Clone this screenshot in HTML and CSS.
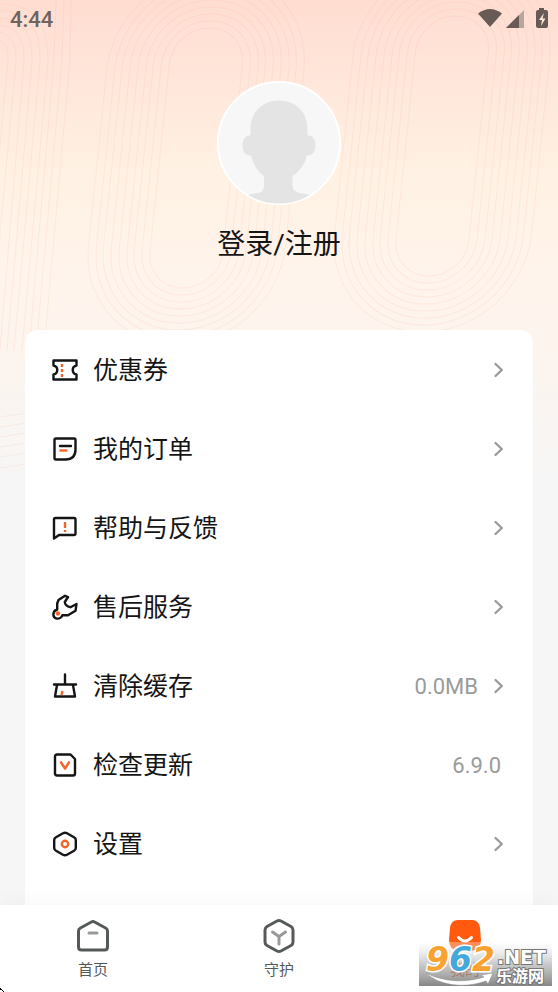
FILE: index.html
```html
<!DOCTYPE html>
<html lang="zh-CN">
<head>
<meta charset="utf-8">
<meta name="viewport" content="width=device-width, initial-scale=1">
<title>我的</title>
<link rel="stylesheet" href="styles.css">
</head>
<body>
<svg class="defs" aria-hidden="true">
  <defs>
    <symbol id="chevron" viewBox="0 0 12 18"><path d="M2.500 3 8.800 9l-6.300 6" fill="none" stroke="#999b9c" stroke-width="2.400" stroke-linecap="round" stroke-linejoin="round"/></symbol>
    <g id="rings" fill="none" stroke="#f9a58a" stroke-opacity=".14" stroke-width="1">
      <g transform="skewX(-5.9)">
        <rect x="176" y="28" width="73" height="260" rx="36"/>
        <rect x="168" y="21" width="89" height="274" rx="44"/>
        <rect x="160" y="14" width="105" height="288" rx="52"/>
        <rect x="153" y="7" width="119" height="302" rx="59"/>
        <rect x="145" y="0" width="135" height="316" rx="67"/>
        <rect x="137" y="-7" width="151" height="330" rx="75"/>
        <rect x="129" y="-14" width="167" height="344" rx="83"/>
        <rect x="122" y="-21" width="181" height="358" rx="90"/>
        <rect x="114" y="-28" width="197" height="372" rx="98"/>
      </g>
    </g>
  </defs>
</svg>
<div class="screen">
  <svg class="pattern" viewBox="0 0 558 475" preserveAspectRatio="xMidYMin slice" aria-hidden="true">
    <use href="#rings"/>
    <use href="#rings" x="246" y="-12"/>
    <g fill="none" stroke="#f9a58a" stroke-opacity=".14">
      <path d="M-10 40Q9 38 8 60L-10 250M-10 32Q17 30 16 60L-6 300M-10 25Q25 22 24 60L0 350M-10 18Q33 14 32 60L7 350M-10 11Q41 6 40 60L14 350M-10 4Q49-2 48 60L22 350M56 0 54 60 29 350M64 0 62 60 36 350M71 0 70 60 44 350"/>
      <path d="M0 417 40 411M0 427 40 421M0 437 40 431M0 447 40 441M0 457 40 451M0 468 40 462"/>
    </g>
  </svg>

  <header class="status">
    <time>4:44</time>
    <svg class="status-icons" width="70" height="22" viewBox="0 0 70 22" aria-label="Wi-Fi、信号、充电中" role="img">
      <path d="M0 5.500Q12-3.500 24 5.500L12 19Z" fill="#685b56"/>
      <path d="M28 20 46 2v18Z" fill="#b8a59e"/><path d="M28 20 41 7v13Z" fill="#685b56"/>
      <path d="M61 0h5v2h2q2 0 2 2v14q0 2-2 2h-8q-2 0-2-2V4q0-2 2-2h1Z" fill="#685b56"/>
      <path d="m66 5-5 7h3l-1 6 4.500-7.500H64.500Z" fill="#ffe9df"/>
    </svg>
  </header>

  <section class="profile">
    <svg class="avatar" viewBox="0 0 124 124" aria-hidden="true">
      <defs><clipPath id="face"><circle cx="62" cy="62" r="60.500"/></clipPath></defs>
      <circle cx="62" cy="62" r="61" fill="#f7f7f7" stroke="#fff" stroke-width="2"/>
      <path clip-path="url(#face)" fill="#e4e4e4" d="M62 19.500c17 0 28.500 12 28.500 28.500v6.500c5-.5 8 3.500 8 9.500 0 7-3.500 11-8.500 10.500-2 8-7 16-14.500 20.500v9c0 6 4 7.500 8 8 6 1 11 2 16 5v15h-75v-15c5-3 10-4 16-5 4-.5 6.500-2.500 6.500-8V95C40 90.500 36 82.500 34 74.500c-5 .5-8.500-3.500-8.500-10.500 0-6 3-10 8-9.500V48c0-16.500 11.500-28.500 28.500-28.500Z"/>
    </svg>
    <a class="login" href="#">登录/注册</a>
  </section>

  <main class="card">
    <a class="row" href="#">
      <svg class="icon" viewBox="0 0 26 26"><path d="M1.500 3.500h23v5c-5 1-5 8 0 9v5h-23v-5c5-1 5-8 0-9Z"/><path class="hot" d="M10 7v3m0 2v3m0 2v3"/></svg>
      <span class="label">优惠券</span><svg class="chevron"><use href="#chevron"/></svg>
    </a>
    <a class="row" href="#">
      <svg class="icon" viewBox="0 0 26 26"><path d="M4 2.500h18q1.500 0 1.500 1.500v9.500q0 10-10 10H4Q2.500 23.500 2.500 22V4Q2.500 2.500 4 2.500Z"/><path d="M8 10h11"/><path class="hot" d="M7.500 14.500h8"/></svg>
      <span class="label">我的订单</span><svg class="chevron"><use href="#chevron"/></svg>
    </a>
    <a class="row" href="#">
      <svg class="icon" viewBox="0 0 26 26"><path d="M3.500 3H22q1.500 0 1.500 1.500v14q0 1.500-1.500 1.500H7l-5 3.500V4.500Q2 3 3.500 3Z"/><path class="hot" d="M13 7v6m0 2v2"/></svg>
      <span class="label">帮助与反馈</span><svg class="chevron"><use href="#chevron"/></svg>
    </a>
    <a class="row" href="#">
      <svg class="icon" viewBox="0 0 26 26"><path d="M16 3 13 1.800 6.500 6 5.200 9.500v6C.500 17 .300 23 4 24.300c3 1 5.500-.8 6.300-3H16l7.500-4.500L24.500 10 18.500 13.200Q13 12 12.800 8Z"/><circle class="dot" cx="6" cy="19.500" r="2.200"/></svg>
      <span class="label">售后服务</span><svg class="chevron"><use href="#chevron"/></svg>
    </a>
    <a class="row" href="#">
      <svg class="icon" viewBox="0 0 26 26"><path d="M13 1.500V11M2 11.500h22M5 12 3 23.500h20L21 12"/><path class="hot" d="m10.500 18-1 4"/></svg>
      <span class="label">清除缓存</span><span class="value">0.0MB</span><svg class="chevron"><use href="#chevron"/></svg>
    </a>
    <a class="row" href="#">
      <svg class="icon" viewBox="0 0 26 26"><path d="M5 2.500h13.500L23 7v14.500q0 2-2 2H5q-2 0-2-2v-17q0-2 2-2Z"/><path class="hot" d="m8.500 9.500 4.500 7 4.500-7"/></svg>
      <span class="label">检查更新</span><span class="value value-end">6.9.0</span>
    </a>
    <a class="row" href="#">
      <svg class="icon" viewBox="0 0 26 26"><path d="M13 1.800q1 0 2 .5l7 4q1.800 1 1.800 2.700v8q0 1.700-1.800 2.700l-7 4q-2 1-4 0l-7-4Q2.200 18.700 2.200 17V9q0-1.700 1.800-2.700l7-4q1-.5 2-.5Z"/><circle class="hot" cx="13" cy="13" r="3.200"/></svg>
      <span class="label">设置</span><svg class="chevron"><use href="#chevron"/></svg>
    </a>
  </main>

  <nav class="tabs">
    <a class="tab" href="#">
      <svg class="tab-icon" viewBox="0 0 36 36"><path d="M18 3.500q.8 0 1.600.5l11 6q1.900 1 1.900 3v16q0 3-3 3h-23q-3 0-3-3V13q0-2 1.900-3l11-6q.8-.5 1.600-.5Z"/><path class="soft" d="M14 15h8"/></svg>
      首页
    </a>
    <a class="tab" href="#">
      <svg class="tab-icon" viewBox="0 0 36 36"><path d="M18 2.500q1 0 2 .5l10 5.500q2 1.200 2 3.500v12q0 2.300-2 3.500L20 33q-2 1-4 0L6 27.500Q4 26.300 4 24V12q0-2.300 2-3.500L16 3q1-.5 2-.5Z"/><path class="soft" d="m11.500 14 6.500 4.500 6.500-4.500M18 18.500V26"/></svg>
      守护
    </a>
    <a class="tab active" href="#">
      <svg class="tab-icon" viewBox="0 0 36 36"><path class="fill" d="M11 2h14q7 0 8 8l1 12q0 10-10 11H12Q2 32 2 22L3 10q1-8 8-8Z"/><path class="smile" d="M11.500 19.500q6.500 7 13 0"/></svg>
      我的
    </a>
  </nav>

  <svg class="watermark" width="134" height="46" viewBox="0 0 134 46" role="img" aria-label="962.NET 乐游网">
    <defs><linearGradient id="shade" x2="0" y2="1"><stop stop-color="#fff" stop-opacity=".3"/><stop offset=".5" stop-color="#a8a8a8" stop-opacity=".6"/><stop offset="1" stop-color="#686868" stop-opacity=".8"/></linearGradient></defs>
    <path d="M0 0h133v44H0Z" fill="url(#shade)"/>
    <path d="M7 31C24 40 47 41 65 35l-3-2 12-2-5 11-2-3C48 46 22 45 7 31Z" fill="#fff" stroke="#888" stroke-width=".5"/>
    <text class="digits" x="7" y="29"><tspan fill="#f9a232">9</tspan><tspan fill="#45a8dd">6</tspan><tspan fill="#f9a232">2</tspan></text>
    <text class="net" x="78" y="22">.NET</text>
    <text class="site" x="77" y="40">乐游网</text>
  </svg>
  <svg class="pointer" width="4" height="4" viewBox="0 0 4 4" aria-hidden="true"><path d="M0 0h1v1h1v1h1v1h1v1H3V3H2V2H0Z"/></svg>
</div>
</body>
</html>
```
FILE: styles.css
```css
* { box-sizing: border-box; }

body {
  margin: 0;
  font-family: Roboto, "Noto Sans CJK SC", sans-serif;
  color: #151515;
  background: #f6f6f6;
}

a { color: inherit; text-decoration: none; }

.defs { position: absolute; width: 0; height: 0; }

.screen {
  position: relative;
  display: flex;
  flex-direction: column;
  min-height: 100vh;
  background: linear-gradient(#ffddd1 0, #ffe5d9 70px, #fff2e4 180px, #fff4ec 280px, #fcf4ee 360px, #f7f6f5 475px, #f6f6f6 476px);
}

.pattern {
  position: absolute;
  top: 0;
  left: 0;
  width: 100%;
  height: 475px;
}

.status {
  position: relative;
  display: flex;
  justify-content: space-between;
  align-items: center;
  height: 38px;
  padding: 0 10px;
  color: #70635e;
  font-size: 22px;
  font-weight: 500;
}

.profile {
  position: relative;
  display: flex;
  flex-direction: column;
  align-items: center;
  gap: 19px;
  padding: 43px 0 65px;
}

.avatar { display: block; width: 124px; height: 124px; }

.login { font-size: 28px; line-height: 41px; }

.card {
  position: relative;
  flex: 1;
  margin: 0 25px;
  padding-bottom: 22px;
  border-radius: 13px 13px 0 0;
  background: #fff;
}

.row {
  display: flex;
  align-items: center;
  height: 79px;
  padding: 0 28px 0 27px;
}

.icon {
  width: 26px;
  height: 26px;
  margin-right: 15px;
  fill: none;
  stroke: #151515;
  stroke-width: 2.4;
  stroke-linecap: round;
  stroke-linejoin: round;
}

.icon .hot { stroke: #f2662b; stroke-linecap: butt; }
.icon .dot { fill: #f2662b; stroke: none; }

.label { flex: 1; padding-top: 3px; font-size: 25px; line-height: 36px; }

.value {
  margin-right: 15px;
  padding-top: 2px;
  font-size: 22px;
  color: #999b9c;
}

.value-end { margin-right: 4px; }

.chevron { width: 12px; height: 18px; }

.tabs {
  position: relative;
  display: grid;
  grid-template-columns: repeat(3, 1fr);
  height: 87px;
  background: #fff;
  box-shadow: 0 -4px 16px rgba(0, 0, 0, 0.03);
}

.tab {
  display: flex;
  flex-direction: column;
  align-items: center;
  gap: 5px;
  padding-top: 13px;
  font-size: 15px;
  line-height: 22px;
  color: #555a59;
}

.tab-icon {
  width: 36px;
  height: 36px;
  fill: none;
  stroke: #555a59;
  stroke-width: 3;
  stroke-linecap: round;
  stroke-linejoin: round;
}

.tab-icon .soft { stroke: #999; }
.tab-icon .fill { fill: #ff5a0d; stroke: none; }
.tab-icon .smile { stroke: #fff; }

.active { color: #e8653a; }

.watermark { position: absolute; right: 5px; bottom: 4px; overflow: visible; }

.pointer { position: absolute; left: 0; bottom: 0; }

.digits {
  font: italic bold 33px "DejaVu Sans", sans-serif;
  stroke: #fff;
  stroke-width: 3;
  paint-order: stroke;
}

.net, .site {
  fill: #fff;
  stroke: #777;
  stroke-width: 2;
  paint-order: stroke;
}

.net { font: bold 19px "DejaVu Sans", sans-serif; }
.site { font: bold 16px "Noto Sans CJK SC", sans-serif; }
```
